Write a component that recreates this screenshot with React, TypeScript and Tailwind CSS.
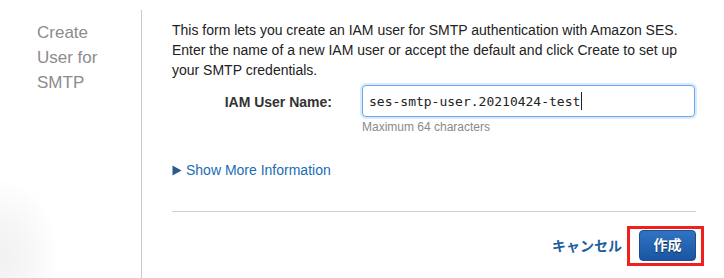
import React from "react";

const sans = { fontFamily: '"Liberation Sans", Arial, "Noto Sans CJK JP", sans-serif' };

export default function App() {
  return (
    <div className="relative h-[278px] w-[724px] overflow-hidden bg-white" style={sans}>
      <div className="pointer-events-none absolute -bottom-[60px] -left-[60px] h-[160px] w-[120px] rounded-full bg-[radial-gradient(closest-side,#f1f1f1,#f6f6f6_45%,#ffffff00)]" />

      <div className="relative flex h-full">
        <aside className="mt-[10px] w-[142px] shrink-0 border-r border-[#c9c9c9] pl-[37px] pt-[10px]">
          <h2 className="text-[17px] leading-[25px] text-[#8c8c8c]">
            Create
            <br />
            User for
            <br />
            SMTP
          </h2>
        </aside>

        <main className="ml-[30px] w-[524px] pt-[20px]">
          <p className="text-[14px] leading-[20px] text-[#222]">
            This form lets you create an IAM user for SMTP authentication with Amazon SES.
            <br />
            Enter the name of a new IAM user or accept the default and click Create to set up
            <br />
            your SMTP credentials.
          </p>

          <div className="mt-[5px] flex">
            <label className="w-[160px] shrink-0 pt-[7px] text-right text-[14px] font-bold leading-[20px] text-[#333]">
              IAM User Name:
            </label>
            <div className="ml-[30px] flex-1">
              <div className="flex h-[32px] w-[333px] items-center rounded-[4px] border border-[#69a9ea] bg-white pl-[6px] shadow-[0_0_0_2px_#dbeafb]">
                <span
                  className="text-[13px] leading-none text-[#222]"
                  style={{ fontFamily: '"DejaVu Sans Mono", Menlo, monospace' }}
                >
                  ses-smtp-user.20210424-test
                </span>
                <span className="ml-px h-[18px] w-px bg-[#222]" />
              </div>
              <div className="mt-[2px] text-[12px] leading-[16px] text-[#8a8a8a]">Maximum 64 characters</div>
            </div>
          </div>

          <button className="mt-[25px] flex items-center text-[14px] leading-[20px] text-[#1c6cb4]">
            <svg width="10" height="11" viewBox="0 0 10 11" className="mr-[4px]">
              <path d="M0.5 0.5 L9.5 5.5 L0.5 10.5 Z" fill="#2b5a8a" />
            </svg>
            Show More Information
          </button>

          <div className="mt-[31px] border-t border-[#cfcfcf]" />

          <div className="mt-[18px] flex items-center justify-end">
            <span className="text-[14px] font-bold leading-[20px] text-[#1d5e9c]">キャンセル</span>
            <div className="relative ml-[17px]">
              <button className="h-[31px] w-[57px] rounded-[4px] border border-[#1b4f8e] bg-gradient-to-b from-[#2f74c4] to-[#1a55a2] text-[14px] font-bold text-white [text-shadow:0_1px_1px_#0d2a52]">
                作成
              </button>
              <span className="pointer-events-none absolute -bottom-[5px] -left-[12px] -right-[8px] -top-[4px] border-[3px] border-[#f0201c]" />
            </div>
          </div>
        </main>
      </div>
    </div>
  );
}
